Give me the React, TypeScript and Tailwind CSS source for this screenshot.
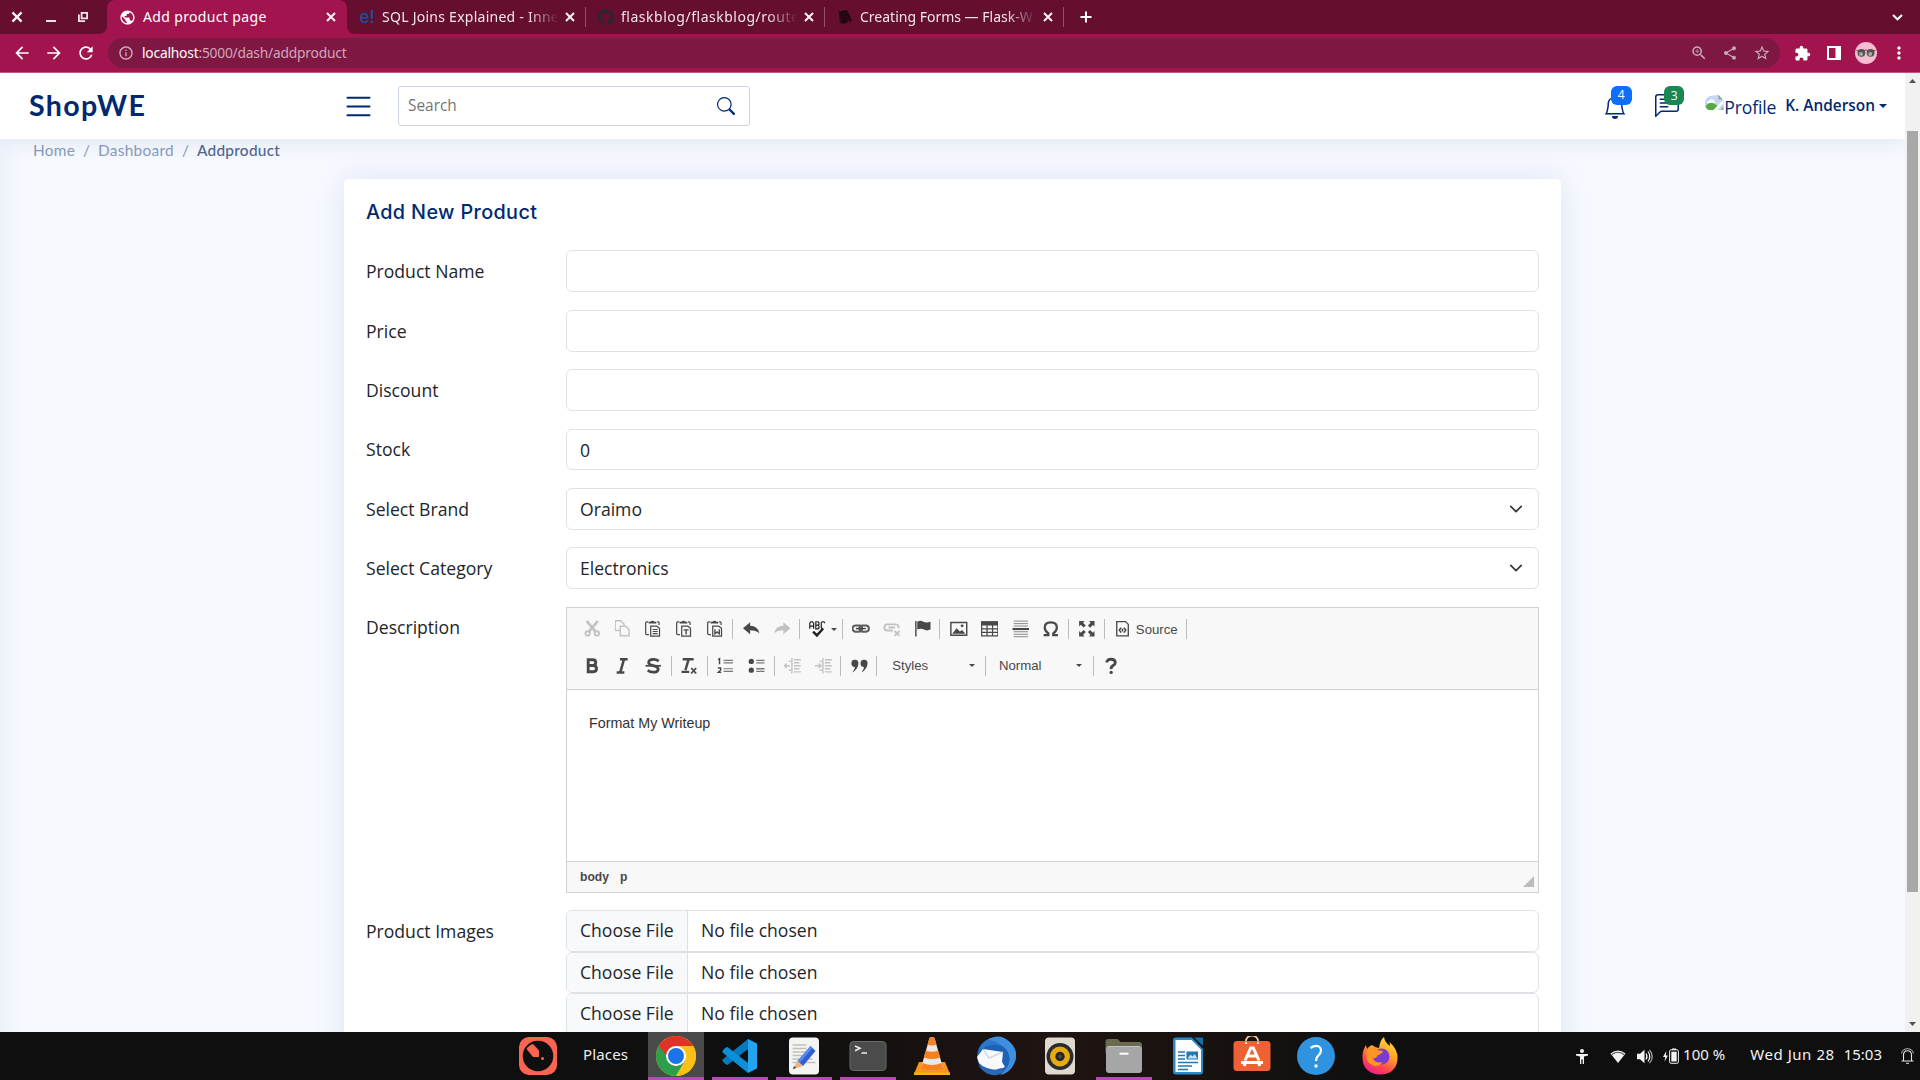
import React from "react";
import type { ReactNode } from "react";
import {
  MdArrowBack,
  MdArrowForward,
  MdRefresh,
  MdInfoOutline,
  MdZoomIn,
  MdShare,
  MdStarBorder,
  MdExtension,
  MdMoreVert,
  MdPublic,
} from "react-icons/md";
import { FaGithub } from "react-icons/fa";
import { BsBell, BsChatLeftText, BsSearch, BsList } from "react-icons/bs";

/* ---------- Browser chrome ---------- */

function Cross({ className }: { className: string }) {
  return (
    <svg className={"shrink-0 " + className} viewBox="0 0 14 14" fill="none" stroke="#fbf3f6" strokeWidth="2">
      <path d="m3 3 8 8M11 3l-8 8" />
    </svg>
  );
}

function Tab({ icon, title, titleClass }: { icon: ReactNode; title: string; titleClass: string }) {
  return (
    <div className="flex h-[34px] w-[239px] shrink-0 items-center">
      <div className="ml-[11px] flex w-[18px] shrink-0 justify-center">{icon}</div>
      <div
        className={
          "ml-[6px] w-[178px] shrink-0 whitespace-nowrap text-[14px] leading-[20px] text-[#f1e6ea] [mask-image:linear-gradient(to_right,black_82%,transparent_99%)] " +
          titleClass
        }
      >
        {title}
      </div>
      <Cross className="ml-[3px] size-[14px]" />
      <div className="ml-auto h-5 w-px bg-[#935069]" />
    </div>
  );
}

function TabStrip() {
  return (
    <div className="flex h-[34px] bg-[#650e30]">
      <div className="flex w-[107px] shrink-0 items-center text-white">
        <Cross className="ml-[9px] size-4" />
        <div className="mt-2 ml-[21px] h-[2px] w-[10px] bg-[#f1e6ea]" />
        <svg className="ml-[22px] size-[10px]" viewBox="0 0 10 10" fill="none" stroke="#f1e6ea" strokeWidth="1.8">
          <path d="M3.6 .9h5.5v5.4H3.6z" />
          <path d="M.9 2.6v6.5h6.2" />
        </svg>
      </div>
      <div className="-ml-2 flex h-[34px] items-end">
        <svg className="size-2" viewBox="0 0 8 8">
          <path d="M8 0v8H0a8 8 0 0 0 8-8" fill="#a1144e" />
        </svg>
        <div className="flex h-[34px] w-[240px] items-center rounded-t-lg bg-[#a1144e]">
          <MdPublic className="ml-[12px] size-[17px] text-white" />
          <div className="ml-[7px] w-[178px] text-[14px] leading-[20px] tracking-[0.35px] text-white">Add product page</div>
          <Cross className="ml-[3px] size-[14px]" />
        </div>
        <svg className="size-2" viewBox="0 0 8 8">
          <path d="M0 0v8h8a8 8 0 0 1-8-8" fill="#a1144e" />
        </svg>
      </div>
      <div className="-ml-2 flex">
        <Tab
          icon={<span className="font-['Inter'] text-[17px] leading-none font-medium text-[#16529b]">e!</span>}
          title="SQL Joins Explained - Inne"
          titleClass="tracking-[0.26px]"
        />
        <Tab
          icon={<FaGithub className="size-4 text-[#24292f]" />}
          title="flaskblog/flaskblog/route"
          titleClass="tracking-[0.52px]"
        />
        <Tab
          icon={
            <svg className="size-4" viewBox="0 0 16 16">
              <path d="M2 2.5 10 1l1.500 3 3.500 8-2.500 1-1-1.500-1 2.500-6 1L2.500 12z" fill="#2a0917" />
              <path d="M2.500 3.500 10 2M4 6.500l2-.3M8 6l2-.3M5 8.500l2 1.500 2-1.500M5 12.500l4-.5M11 5l1.500 4" stroke="#0a0306" strokeWidth="1" fill="none" />
            </svg>
          }
          title="Creating Forms — Flask-W"
          titleClass=""
        />
      </div>
      <svg className="mt-[11px] ml-[16px] size-3" viewBox="0 0 12 12" stroke="#fff" strokeWidth="2">
        <path d="M6 .5v11M.5 6h11" />
      </svg>
      <svg className="mt-[14px] mr-[17px] ml-auto h-[7px] w-[11px]" viewBox="0 0 11 7" fill="none" stroke="#fff" strokeWidth="2">
        <path d="m1 1 4.500 4.300L10 1" />
      </svg>
    </div>
  );
}

function Toolbar() {
  return (
    <div className="flex h-[39px] items-center border-b border-[#bd5780] bg-[#a1144e] text-white">
      <MdArrowBack className="ml-[12px] size-5" />
      <MdArrowForward className="ml-[12px] size-5" />
      <MdRefresh className="ml-[12px] size-5" />
      <div className="ml-[12px] flex h-[30px] w-[1672px] items-center rounded-full bg-[#7e1843]">
        <MdInfoOutline className="ml-[10px] size-4 text-[#d3b0bf]" />
        <div className="ml-2 text-[13.8px] leading-[20px] tracking-[-0.210px] text-[#cfa6b8]">
          <span className="text-white">localhost</span>:5000/dash/addproduct
        </div>
        <div className="ml-auto flex items-center text-[#c6a9b5]">
          <MdZoomIn className="mr-[14px] size-[18px]" />
          <MdShare className="mr-[15px] size-[16px]" />
          <MdStarBorder className="mr-[9px] size-[18px]" />
        </div>
      </div>
      <MdExtension className="ml-[14px] size-[17px]" />
      <svg className="ml-[16px] size-[14px]" viewBox="0 0 14 14">
        <path fillRule="evenodd" d="M0 0h14v14H0zM2 2v10h6.500V2z" fill="#fff" />
      </svg>
      <svg className="ml-[14px] size-[22px]" viewBox="0 0 22 22">
        <circle cx="11" cy="11" r="11" fill="#f8bbd0" />
        <circle cx="6.400" cy="10.800" r="3.900" fill="#4d5452" />
        <circle cx="15.600" cy="10.800" r="3.900" fill="#4d5452" />
        <circle cx="6" cy="12" r="2" fill="#a3aaa8" />
        <circle cx="15.200" cy="12" r="2" fill="#a3aaa8" />
        <path d="M1.500 8.500h7.500q2-1 4 0h7.500" stroke="#6a4444" strokeWidth=".9" fill="none" />
      </svg>
      <MdMoreVert className="ml-[12px] size-5" />
    </div>
  );
}

/* ---------- Site header ---------- */

function SiteHeader() {
  return (
    <header className="relative z-10 flex h-[66px] shrink-0 items-center bg-white shadow-[0_2px_22px_rgba(1,41,112,0.1)]">
      <div className="-mt-[2px] ml-[29px] w-[312px] font-['Lato'] text-[28.6px] leading-none font-bold tracking-[1.35px] text-[#012970]">
        ShopWE
      </div>
      <BsList className="size-[35px] shrink-0 text-[#012970]" />
      <div className="ml-[22px] flex h-[40px] w-[352px] items-center rounded-[3px] border border-[#ccd4e2] bg-white">
        <span className="ml-[9px] text-[15.4px] text-[#757575]">Search</span>
        <BsSearch className="mr-[14px] ml-auto size-[18px] text-[#012970]" />
      </div>
      <div className="ml-auto flex items-center">
        <div className="relative mt-[2px] mr-[28px]">
          <BsBell className="size-[24px] text-[#012970]" />
          <span className="absolute -top-[9px] left-[7.500px] flex h-[19px] w-[21px] items-center justify-center rounded-[6px] bg-[#0d6efd] text-[12px] text-white">
            4
          </span>
        </div>
        <div className="relative mt-[1px] mr-[26px]">
          <BsChatLeftText className="size-[24px] text-[#012970]" />
          <span className="absolute -top-[8px] left-[9px] flex h-[19px] w-[20px] items-center justify-center rounded-[6px] bg-[#198754] text-[12px] text-white">
            3
          </span>
        </div>
        <svg className="-mt-[6px] h-[17px] w-[19px]" viewBox="0 0 19 17">
          <path d="M0 10a8 8 0 0 1 5-8L13 1l3 3v1l2.500 1v8L15 16H3a8 8 0 0 1-3-6" fill="#c5d6f4" />
          <path d="M2 9q0-2 2-2 1-2.500 3.500-1.500Q10 6 9.500 9z" fill="#fff" />
          <path d="M.5 12Q4 8 8 9l5 3-3 4H4q-3-1-3.500-4" fill="#56a845" />
          <path d="m8 16.500 10-10.500v3.500L12 16.500z" fill="#fff" />
          <path d="m13 .5 5 5h-4.500zM17 14l1.500-2v4h-3z" fill="#9aa0a6" />
        </svg>
        <span className="mt-[2px] text-[17.600px] tracking-[-0.150px] text-[#012970]">Profile</span>
        <span className="ml-[9px] text-[15.4px] font-semibold text-[#012970]">K. Anderson</span>
        <svg className="mr-[18px] ml-1 h-1 w-2" viewBox="0 0 8 4">
          <path d="M0 0h8L4 4z" fill="#012970" />
        </svg>
      </div>
    </header>
  );
}

/* ---------- Form ---------- */

function Row({ label, children }: { label: string; children: ReactNode }) {
  return (
    <div className="mb-[17.600px] flex">
      <div className="w-[200px] shrink-0 pt-[7.700px] text-[17.600px] leading-[26.400px] text-[#212529]">{label}</div>
      <div className="w-[973px]">{children}</div>
    </div>
  );
}

function Field({ value, select }: { value?: string; select?: boolean }) {
  return (
    <div className="flex h-[41.800px] items-center rounded-[6px] border border-[#dee2e6] bg-white px-[13px] text-[17.600px] leading-[26px] text-[#212529]">
      {value}
      {select && (
        <svg className="mr-[2px] ml-auto size-[14px]" viewBox="0 0 16 16" fill="none" stroke="#343a40" strokeWidth="2" strokeLinecap="round" strokeLinejoin="round">
          <path d="m2 5 6 6 6-6" />
        </svg>
      )}
    </div>
  );
}

function FileField() {
  return (
    <div className="flex h-[41.400px] overflow-hidden rounded-[6px] border border-[#dee2e6] bg-white text-[17.600px] leading-[39.500px] text-[#212529]">
      <div className="w-[121px] border-r border-[#dee2e6] bg-[#f8f9fa] pl-[13px]">Choose File</div>
      <div className="pl-[13px]">No file chosen</div>
    </div>
  );
}

/* ---------- Rich text editor ---------- */

function Tool({ children, off }: { children: ReactNode; off?: boolean }) {
  return (
    <div className={"flex w-[30.800px] shrink-0 justify-center " + (off ? "opacity-30" : "")}>
      <svg className="size-[17.600px]" viewBox="0 0 16 16" fill="none" stroke="#484848" strokeWidth="1.300">
        {children}
      </svg>
    </div>
  );
}

function Sep() {
  return <div className="mr-[3px] ml-[1.200px] h-5 w-px shrink-0 bg-[#bcbcbc]" />;
}

function Caret() {
  return (
    <svg className="h-[3px] w-[6px]" viewBox="0 0 6 3">
      <path d="M0 0h6L3 3z" fill="#484848" />
    </svg>
  );
}

function Clipboard() {
  return (
    <>
      <path d="M3 1.700H1.600q-1 0-1 1v9.600q0 1 1 1h2M11 1.700h1q.8 0 .8 1V4.500" strokeWidth="1.100" />
      <path d="M3.300 3.200V1.500h1.500q2-1.800 4 0h1.500v1.700z" fill="#484848" stroke="none" />
      <path d="M5.200 5.600h5.500l2.500 2v7h-8z" strokeWidth="1.100" />
    </>
  );
}

function Editor() {
  return (
    <div className="border border-[#d1d1d1] bg-white">
      <div className="h-[82px] border-b border-[#d1d1d1] bg-[#f8f8f8] pt-[2.500px] pl-[10.200px] font-['Liberation_Sans'] text-[13.200px] text-[#484848]">
        <div className="flex h-[38px] items-center">
          <Tool off>
            <path d="m2.500 1 8 9.500M12.500 1l-8 9.500" strokeWidth="2.400" />
            <circle cx="3.300" cy="12.200" r="2" strokeWidth="1.700" />
            <circle cx="11.700" cy="12.200" r="2" strokeWidth="1.700" />
          </Tool>
          <Tool off>
            <path d="M4.500 9.500H.2V.7h5l3 3v2" />
            <path d="M4.800 5.700h5l3 3v5.600h-8z" />
          </Tool>
          <Tool>
            <Clipboard />
            <path d="M7 8.700h4.500M7 10.500h4.500M7 12.400h4.500" strokeWidth="1" />
          </Tool>
          <Tool>
            <Clipboard />
            <path d="M7 9h4.500M9.200 9v4.300" strokeWidth="1.300" />
          </Tool>
          <Tool>
            <Clipboard />
            <path d="M7.200 8.500v4l2-1.700 2 1.700v-4" strokeWidth="1.200" />
          </Tool>
          <Sep />
          <Tool>
            <path d="M6.500 2v3.300q7 0 8.500 7-3-3-8.500-3V13L0 7.500z" fill="#484848" stroke="none" />
          </Tool>
          <Tool off>
            <path d="M8.500 2v3.300q-7 0-8.500 7 3-3 8.500-3V13L15 7.500z" fill="#484848" stroke="none" />
          </Tool>
          <Sep />
          <div className="flex w-[37.500px] shrink-0 items-center pl-[6px]">
            <svg className="mr-[4px] size-[17.600px]" viewBox="0 0 16 16" fill="none" stroke="#222" strokeWidth="1.100">
              <path d="M.7 8V3l1-1.400h1.500L4.200 3v5M.7 5.500h3.500M6.200 8V1.600h2l.8.9v1.600l-.7.6.8.9v1.600L8.300 8zM6.200 4.700h2M14.500 2.700l-1-1.100h-1.300l-1 1V7l1 1h1" />
              <path d="m3.700 10.500 3.500 3.500 5.500-6" strokeWidth="2.200" />
            </svg>
            <Caret />
          </div>
          <Sep />
          <Tool>
            <rect x=".5" y="5" width="8.700" height="5.600" rx="2.800" strokeWidth="1.800" stroke="#5c5c5c" />
            <rect x="6.700" y="5" width="8.700" height="5.600" rx="2.800" strokeWidth="1.800" stroke="#5c5c5c" />
            <path d="M3.500 7.800h9" strokeWidth="1.400" />
          </Tool>
          <Tool off>
            <path d="M9 9.500H4a2.600 2.600 0 0 1 0-5.500h7.500a2.600 2.600 0 0 1 2.600 3.500M5 6.800h6" strokeWidth="1.700" />
            <path d="m10.500 10 4.500 4.500M15 10l-4.500 4.500" strokeWidth="1.700" />
          </Tool>
          <Tool>
            <path d="M1.700 1v14" />
            <path d="M3 1.500q3-1.500 5.500 0t6.500 0v7.200q-3.500 1.500-6 0T3 8.700z" fill="#484848" stroke="none" />
          </Tool>
          <Sep />
          <Tool>
            <path d="M.8 2.200h14.400v11.600H.8z" />
            <path d="m2 12.500 4-5 3 3 2-1.500 3 3.500z" fill="#484848" stroke="none" />
            <circle cx="11" cy="5.300" r="1.300" fill="#484848" stroke="none" />
          </Tool>
          <Tool>
            <path d="M0 1h16v4H0z" fill="#484848" stroke="none" />
            <path d="M.6 4v10.400h14.800V4M5.500 4v10.500M10.500 4v10.500M0 8h16M0 11.300h16" strokeWidth="1.100" />
          </Tool>
          <Tool>
            <path d="M1.500 1h13M1.500 3.300h13M1.500 5.500h13M1.500 10.700h13M1.500 13h13M1.500 15.200h13" strokeWidth=".9" stroke="#888" />
            <path d="M.5 8.200h15" strokeWidth="1.900" />
          </Tool>
          <Tool>
            <path d="M1.500 13.700h4.300v-1.500Q2.500 10 2.500 7q0-4.800 5.500-4.800T13.500 7q0 3-3.300 5.200v1.500h4.300" strokeWidth="2" />
          </Tool>
          <Sep />
          <Tool>
            <path d="M1 1h5L4.600 2.400l2.500 2.500-2 2-2.600-2.500L1 6zM15 1v5l-1.500-1.500-2.500 2.500-2-2 2.500-2.500L10 1zM1 15v-5l1.500 1.500L5.100 9l2 2-2.500 2.500L6 15zM15 15h-5l1.400-1.400L9 11l2-2 2.500 2.500L15 10z" fill="#484848" stroke="none" />
          </Tool>
          <Sep />
          <div className="flex w-[77.500px] shrink-0 items-center pl-[6.500px]">
            <svg className="mr-[4px] size-[17.600px]" viewBox="0 0 16 16" fill="none" stroke="#484848" strokeWidth="1.200">
              <path d="M2.500 1.500h8L13 4v10.500H2.500z" />
              <path d="M6.500 7 4.800 9.200l1.700 2.300M9 7l1.700 2.200L9 11.500M7.700 8v2.500" strokeWidth="1.400" />
            </svg>
            <span className="pt-px">Source</span>
          </div>
          <Sep />
        </div>
        <div className="flex h-[35px] items-center">
          <Tool>
            <path d="M3.800 2.500h4.200q2.700 0 2.700 2.600T8 7.700H3.800zM3.800 7.700h4.700q2.900 0 2.900 2.800t-2.900 2.900H3.800z" strokeWidth="2.600" />
          </Tool>
          <Tool>
            <path d="M4.500 2h7M1.500 14h7M8.200 2 4.800 14" strokeWidth="2.300" />
          </Tool>
          <Tool>
            <path d="M12.500 3.800Q10.500 2.200 7.500 2.200 3.300 2.200 3.300 5 3.300 7 7.500 7.800t4.500 3Q12 13.800 7.500 13.800q-3 0-5-1.700" strokeWidth="2.500" />
            <path d="M.5 8h14" strokeWidth="1.600" />
          </Tool>
          <Sep />
          <Tool>
            <path d="M1.500 2h10M7 2 4 12M.5 13.500h7" strokeWidth="2.200" />
            <path d="m9.300 10 4.500 5M13.800 10l-4.500 5" strokeWidth="1.600" />
          </Tool>
          <Sep />
          <Tool>
            <path d="M6 3h8.500M6 5.300h8.500M6 10.700h8.500M6 13h8.500" strokeWidth="1.100" stroke="#777" />
            <path d="m1 2.500 1.300-1v5M.8 10h2.500v2L1 14H3.800" strokeWidth="1.300" />
          </Tool>
          <Tool>
            <path d="M7.500 3h7.500M7.500 5.300h7.500M7.500 10.700h7.500M7.500 13h7.500" strokeWidth="1.200" stroke="#777" />
            <circle cx="3" cy="4" r="2.400" fill="#484848" stroke="none" />
            <circle cx="3" cy="12" r="2.400" fill="#484848" stroke="none" />
          </Tool>
          <Sep />
          <Tool off>
            <path d="M7.200 1v14M9 2.500h6.300M9 5.200h5M9 8h6.300M9 10.700h5M9 13.500h6.300M-.2 8h5.500M2.300 6 .5 8l1.800 2M4.300 4h2M4.300 12h2" />
          </Tool>
          <Tool off>
            <path d="M7.200 1v14M9 2.500h6.300M9 5.200h5M9 8h6.300M9 10.700h5M9 13.500h6.300M-.2 8h5.500M3.500 6l1.800 2-1.800 2M4.300 4h2M4.300 12h2" />
          </Tool>
          <Sep />
          <Tool>
            <path d="M3.700 2.500A2.900 2.900 0 0 1 6.700 6q0 5-5.500 8 2.500-3 2.300-5A2.900 2.900 0 0 1 3.700 2.500M12 2.500A2.900 2.900 0 0 1 15 6q0 5-5.500 8 2.500-3 2.300-5a2.900 2.900 0 0 1 .2-6.500" fill="#484848" stroke="none" />
          </Tool>
          <Sep />
          <div className="flex w-[104px] shrink-0 items-center justify-between pr-[9px] pl-[12px]">
            Styles <Caret />
          </div>
          <Sep />
          <div className="flex w-[102px] shrink-0 items-center justify-between pr-[9px] pl-[9.500px]">
            Normal <Caret />
          </div>
          <Sep />
          <Tool>
            <path d="M3.500 5Q3.500 2 7.300 2t3.900 3q0 1.600-2 2.800T7.400 11" strokeWidth="2.600" />
            <circle cx="7.400" cy="14" r="1.500" fill="#484848" stroke="none" />
          </Tool>
        </div>
      </div>
      <div className="h-[171px] pt-[22px] pl-[22px] font-['Liberation_Sans'] text-[14.300px] leading-[23px] text-[#333]">
        Format My Writeup
      </div>
      <div className="flex h-[31px] justify-between border-t border-[#d1d1d1] bg-[#f8f8f8]">
        <div className="flex gap-[11px] pl-[13px] font-['Liberation_Sans'] text-[12.100px] leading-[31px] font-bold text-[#484848]">
          <span>body</span>
          <span>p</span>
        </div>
        <svg className="mt-[14px] mr-[4px] size-[11px]" viewBox="0 0 11 11">
          <path d="M11 0v11H0z" fill="#bcbcbc" />
        </svg>
      </div>
    </div>
  );
}

/* ---------- Page ---------- */

function Page() {
  return (
    <div className="flex h-[959px] overflow-hidden">
      <div className="relative flex w-[1905px] flex-col overflow-hidden bg-[#f6f9ff]">
        <SiteHeader />
        <div className="flex grow">
          <div className="-ml-2 w-2 shrink-0 shadow-[0_0_22px_rgba(1,41,112,0.14)]" />
          <div className="min-w-0 grow">
            <div className="flex h-[40px] gap-[8px] pt-px pl-[33px] font-['Lato'] text-[15.400px] leading-[20px] text-[#899bbd]">
              <span className="tracking-[0.250px]">Home</span>
              <span>/</span>
              <span className="tracking-[0.300px]">Dashboard</span>
              <span>/</span>
              <span className="font-medium tracking-[0.250px] text-[#51678f]">Addproduct</span>
            </div>
            <div className="ml-[344px] h-[1100px] w-[1217px] rounded-[5px] bg-white px-[22px] shadow-[0_0_33px_rgba(1,41,112,0.1)]">
              <h1 className="pt-[21px] pb-[24.950px] font-['Inter'] text-[19.800px] leading-[25.500px] font-medium tracking-[0.370px] text-[#012970]">
                Add New Product
              </h1>
              <Row label="Product Name">
                <Field />
              </Row>
              <Row label="Price">
                <Field />
              </Row>
              <Row label="Discount">
                <Field />
              </Row>
              <Row label="Stock">
                <Field value="0" />
              </Row>
              <Row label="Select Brand">
                <Field value="Oraimo" select />
              </Row>
              <Row label="Select Category">
                <Field value="Electronics" select />
              </Row>
              <Row label="Description">
                <Editor />
              </Row>
              <Row label="Product Images">
                <FileField />
                <FileField />
                <FileField />
              </Row>
            </div>
          </div>
        </div>
      </div>
      <div className="flex w-[15px] flex-col items-center bg-[#f1f1f1]">
        <svg className="mt-[6px] h-1 w-[7px]" viewBox="0 0 7 4">
          <path d="M0 4h7L3.500 0z" fill="#505050" />
        </svg>
        <div className="mt-[48px] h-[761px] w-[11px] bg-[#a8a8a8]" />
        <svg className="mt-auto mb-[6px] h-1 w-[7px]" viewBox="0 0 7 4">
          <path d="M0 0h7L3.500 4z" fill="#505050" />
        </svg>
      </div>
    </div>
  );
}

/* ---------- Desktop dock ---------- */

function DockItem({ children, open, active }: { children: ReactNode; open?: boolean; active?: boolean }) {
  return (
    <div className={"mr-2 flex h-12 w-14 shrink-0 flex-col items-center pt-[4px] " + (active ? "bg-[#4a4a4a]" : "")}>
      <svg className="size-10 shrink-0" viewBox="0 0 40 40">
        {children}
      </svg>
      {open && <div className="mt-px h-[3px] w-14 bg-[#b44cb4]" />}
    </div>
  );
}

function Dock() {
  return (
    <div className="flex h-12 bg-linear-to-r from-[#0f0f0f] from-40% via-[#1f1411] via-55% to-[#0f0f0f] to-72%">
      <svg className="mt-[4px] ml-[518px] size-10 shrink-0" viewBox="0 0 40 40">
        <rect x="1" y="1" width="38" height="38" rx="10" fill="#fa6450" />
        <circle cx="20" cy="20" r="15.300" fill="#0f0f0f" />
        <path d="M8.500 13Q11 9 15 8l6 6.500V21h-6z" fill="#fa6450" />
        <circle cx="24.500" cy="22.500" r="1.500" fill="#fa6450" />
      </svg>
      <div className="mt-[12px] ml-[25px] w-[65px] text-[15px] leading-[20px] tracking-[0.150px] text-[#ececec]">Places</div>

      <DockItem open active>
        <circle cx="20" cy="20" r="20" fill="#fbc116" />
        <path d="M20 20 2.700 10A20 20 0 0 0 20 40l10-15z" fill="#2f9e4c" />
        <path d="M2.700 10A20 20 0 0 1 37.300 10H20v10h-9z" fill="#df3327" />
        <path d="M37.300 10H20v10l8.700 5L20 40A20 20 0 0 0 37.300 10" fill="#fbc116" />
        <circle cx="20" cy="20" r="10" fill="#fff" />
        <circle cx="20" cy="20" r="8" fill="#1a73e8" />
      </DockItem>
      <DockItem open>
        <path d="m28 3 9 4.500v25L28 37z" fill="#24a3f1" />
        <path d="M28 3v10L7.500 29 5 28l-2.500-3v-1.500z" fill="#0878bd" />
        <path d="M28 37V27L7.500 11 5 12l-2.500 3v1.500z" fill="#0d8fd8" />
      </DockItem>
      <DockItem open>
        <rect x="5" y="1.500" width="30" height="37" rx="4" fill="#f4f4f2" />
        <path d="M8.500 9h14M8.500 12.500h14M8.500 16h14M8.500 19.500h10M8.500 23h20M8.500 26.500h23" stroke="#c4c0b8" strokeWidth="1.300" />
        <path d="m26.500 10 5 5L19 30l-5.500-5z" fill="#2f5fd6" />
        <path d="m26.500 10 2 2-13 15-2-2z" fill="#5a89f0" />
        <path d="m13.500 25 5.500 5-10 3z" fill="#f2b273" />
        <path d="m10 30-1 3 3-1z" fill="#333" />
      </DockItem>
      <DockItem open>
        <rect x="2" y="5.500" width="36" height="29" rx="3.500" fill="#4b4b4b" stroke="#6b6b6b" />
        <path d="m7 10 5 2.300-5 2.400M13.500 17h5.500" stroke="#eee" strokeWidth="1.500" fill="none" />
      </DockItem>
      <DockItem>
        <path d="M7 26h26l5 12H2z" fill="#f7941d" />
        <path d="M2 36.500h36V39H2z" fill="#ffb01f" />
        <path d="M17.500 2q2.500-2 5 0L31 32q-11 5-22 0z" fill="#e8e8e8" />
        <path d="M17.500 2q2.500-2 5 0l2 6.500q-4.500 2-9 0zM13.800 14.500q6.200 2.500 12.400 0l2 7q-8.200 3-16.400 0zM10.500 27q9.500 4 19 0l1.500 5.500q-11 4.500-22 0z" fill="#f5821f" />
      </DockItem>
      <DockItem>
        <circle cx="19.500" cy="20" r="18.500" fill="#1f62b5" />
        <path d="M11 4Q24-4 34 6t4 22Q34 37 24 39q12-9 9-20T11 4" fill="#3f8fe0" />
        <path d="M11 4q-7 4-8 12 8-10 22-6-3-6-14-6" fill="#2d78cc" />
        <path d="m1 21 6-8 20 3-1 10 3 5-7 3Q8 33 3 27z" fill="#f7f9fc" />
        <path d="m7 13 6 9 14-6" stroke="#c4d0dc" strokeWidth="1.200" fill="none" />
        <path d="M2 28q6 7 17 6l6-2 3 3q-4 5-12 4-10-2-14-11" fill="#2a67b8" />
      </DockItem>
      <DockItem>
        <rect x="5" y="1.500" width="30" height="37" rx="4" fill="#dedad0" />
        <circle cx="20" cy="20.500" r="13.500" fill="#2c2c30" />
        <circle cx="20" cy="20.500" r="10" fill="#e3ac11" />
        <circle cx="20" cy="20.500" r="4.700" fill="#242424" />
        <circle cx="20" cy="20.500" r="2" fill="#484848" />
      </DockItem>
      <DockItem open>
        <path d="M1.500 10V6q0-3 3-3h9l3 3H35q3 0 3 3v8H1.500z" fill="#6a6a50" />
        <rect x="2" y="10" width="36" height="27" rx="3" fill="#a6a6a6" />
        <path d="M4 10.500h32" stroke="#c4c4c4" />
        <path d="M15.500 17.700h9" stroke="#fff" strokeWidth="2" />
      </DockItem>
      <DockItem>
        <path d="M5 4.500Q5 1.500 8 1.500h16L35 13v22.500q0 3-3 3H8q-3 0-3-3z" fill="#2a8bc4" />
        <path d="M7.500 4h16L33 13.500V36H7.500z" fill="#fff" />
        <path d="M26 1.500h9V10z" fill="#176ea3" />
        <path d="M10 16h7M10 19.500h7M10 23h7M10 26.500h20M10 30h14M10 33.500h10" stroke="#1d79b0" strokeWidth="1.400" />
        <rect x="18.500" y="15.500" width="11.500" height="8" fill="#1d79b0" />
        <path d="m19.500 22.500 3-4 2 2 2-2.500 3 4.500z" fill="#c8e2f3" />
      </DockItem>
      <DockItem>
        <path d="M14 7V5a6 5.500 0 0 1 12 0v2" stroke="#f6c9a0" strokeWidth="1.800" fill="none" />
        <rect x="1.500" y="5" width="37" height="30" rx="3.500" fill="#ee6135" />
        <path d="M14 8V6M26 8V6" stroke="#f6dfc8" strokeWidth="2" />
        <path d="M13 24.500 18.700 12h2.600L27 24.500M9 26.500h22M12 29.800l1.500-3M28 29.800l-1.500-3M16 20h8" stroke="#fff" strokeWidth="3" fill="none" />
      </DockItem>
      <DockItem>
        <circle cx="20" cy="20" r="19" fill="#2f93df" />
        <path d="M14.500 12q6-4 9.500-.5 2.500 3.800-1.200 7.500-2.800 2.500-2.800 6" stroke="#fff" strokeWidth="2.200" fill="none" />
        <circle cx="20" cy="30" r="1.700" fill="#fff" />
      </DockItem>
      <DockItem>
        <defs>
          <linearGradient id="fox" x1=".8" y1="0" x2=".3" y2="1">
            <stop offset="0" stopColor="#ffe53b" />
            <stop offset=".45" stopColor="#ff9a26" />
            <stop offset=".75" stopColor="#ff4550" />
            <stop offset="1" stopColor="#e8208c" />
          </linearGradient>
        </defs>
        <path d="M24 1q1 6 6 9 0-2-.5-4 9 8 8 17.500Q36 38 20 38.500 4 38 2.500 23 2 15 6 9l1 4q2-3 5-4 3 3 7 3 1-8 5-11" fill="url(#fox)" />
        <circle cx="21.500" cy="20.500" r="8" fill="#7a3bd0" />
        <path d="M7 14q6-5 10 0l6 1q-1 3-5 4-2 4-6 3 4 6 11 4-7 8-15 0-3-5-1-12" fill="#ff9526" />
      </DockItem>

      <div className="ml-auto flex h-12 items-center text-[15px] text-[#f2f2f2]">
        <svg className="mr-[22px] h-[15px] w-3" viewBox="0 0 12 15" fill="#f2f2f2">
          <circle cx="6" cy="2" r="2" />
          <path d="M0 5h12v1.500L8 7.500V15H6.700v-4.500H5.300V15H4V7.500L0 6.500z" />
        </svg>
        <svg className="mr-[11px] h-[13px] w-4" viewBox="0 0 16 13">
          <path d="M8 13 .5 3.500Q8-2.500 15.500 3.500z" fill="#f2f2f2" />
          <path d="M2 4.500Q8 0 14 4.500" stroke="#555" strokeWidth="1.200" fill="none" />
        </svg>
        <svg className="mr-[10px] h-[15px] w-4" viewBox="0 0 16 15" fill="none" stroke="#f2f2f2" strokeWidth="1.200">
          <path d="M0 4.800h3L7.500.8v13.400L3 10.200H0z" fill="#f2f2f2" stroke="none" />
          <path d="M9 4.500q2 3 0 6M11 2.500q3.500 5 0 10" />
          <path d="M12.500.8q5.500 6.700 0 13.400" stroke="#aaa" />
        </svg>
        <svg className="mr-[4px] h-4 w-4" viewBox="0 0 16 16">
          <path d="M3.300 3 0 9h2.200L1.500 13.500 5 7.500H2.800z" fill="#f2f2f2" />
          <path d="M9 .5h4v1.500H9z" fill="#f2f2f2" />
          <rect x="6.600" y="1.800" width="8.800" height="13.500" rx="1.500" stroke="#f2f2f2" fill="none" />
          <rect x="8.300" y="3.700" width="5.400" height="9.800" fill="#f2f2f2" />
        </svg>
        <span className="-mt-[3px] mr-[25px]">100 %</span>
        <span className="-mt-[3px] tracking-[0.550px]">Wed Jun 28</span>
        <span className="-mt-[3px] mr-[19px] ml-[9px]">15:03</span>
        <svg className="mr-[6px] h-4 w-[13px]" viewBox="0 0 13 16" fill="none" stroke="#e6e6e6" strokeWidth="1.100">
          <path d="M.5 13h12M2.500 12.500V7Q2.500 2.700 6.500 2.700t4 4.300v5.500M5 15.200h3" />
          <path d="M.7 5.500Q1 1 6.500.7 12 1 12.300 5.500" strokeWidth=".8" />
        </svg>
      </div>
    </div>
  );
}

export default function App() {
  return (
    <div className="h-[1080px] w-[1920px] overflow-hidden font-['Noto_Sans','Open_Sans',sans-serif]">
      <TabStrip />
      <Toolbar />
      <div className="font-['Open_Sans','Noto_Sans',sans-serif]">
        <Page />
      </div>
      <Dock />
    </div>
  );
}
